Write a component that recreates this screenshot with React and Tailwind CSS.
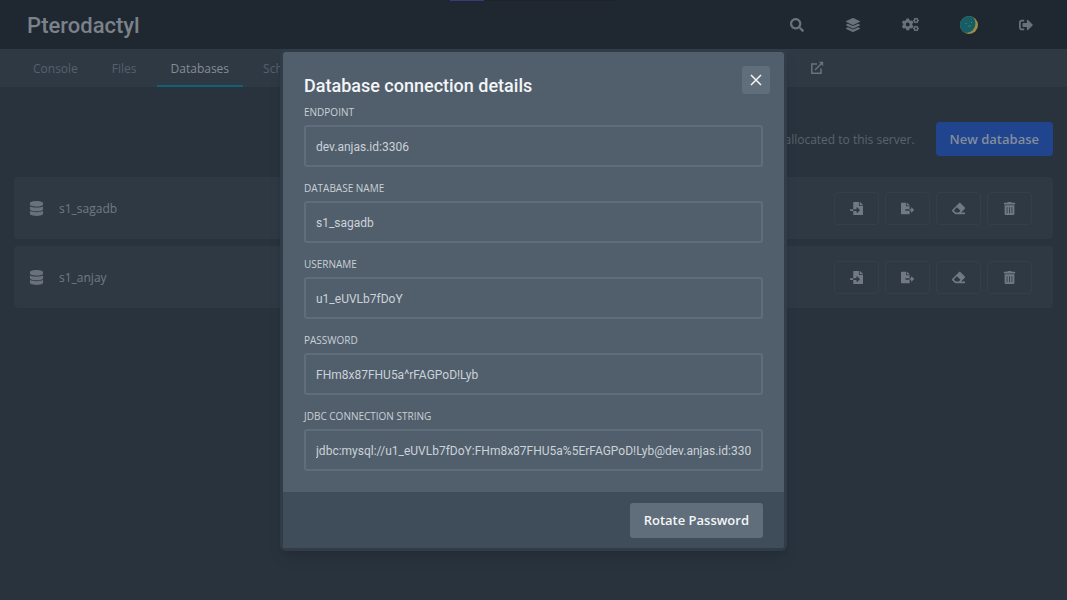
import { useState } from "react";
import { FaSearch, FaLayerGroup, FaCogs, FaSignOutAlt, FaDatabase } from "react-icons/fa";
import { FaFileImport, FaFileExport, FaEraser, FaTrashAlt } from "react-icons/fa";

const tabs = ["Console", "Files", "Databases", "Schedules", "Users", "Backups", "Network", "Startup", "Settings", "Activity"];

const databases = ["s1_sagadb", "s1_anjay"];

const actions = [
  { label: "Import", Icon: FaFileImport },
  { label: "Export", Icon: FaFileExport },
  { label: "Clear", Icon: FaEraser },
  { label: "Delete", Icon: FaTrashAlt },
];

const fields = [
  { id: "endpoint", label: "Endpoint", value: "dev.anjas.id:3306" },
  { id: "name", label: "Database name", value: "s1_sagadb" },
  { id: "username", label: "Username", value: "u1_eUVLb7fDoY" },
  { id: "password", label: "Password", value: "FHm8x87FHU5a^rFAGPoD!Lyb" },
  {
    id: "jdbc",
    label: "JDBC Connection String",
    value: "jdbc:mysql://u1_eUVLb7fDoY:FHm8x87FHU5a%5ErFAGPoD!Lyb@dev.anjas.id:3306/s1_sagadb",
  },
];

function Avatar() {
  return (
    <svg viewBox="0 0 36 36" className="size-[18px]" aria-hidden="true">
      <defs>
        <clipPath id="avatar-clip">
          <circle cx="18" cy="18" r="18" />
        </clipPath>
      </defs>
      <g clipPath="url(#avatar-clip)">
        <rect width="36" height="36" fill="#988e46" />
        <circle cx="12" cy="15" r="19" fill="#175d66" />
        <circle cx="12" cy="15" r="1.2" fill="#6c878c" />
        <circle cx="23" cy="13" r="1.2" fill="#6c878c" />
        <path d="M16 20 Q19 22 22 19" fill="none" stroke="#6c878c" strokeWidth="1.3" />
      </g>
    </svg>
  );
}

function ExternalLinkIcon() {
  return (
    <svg viewBox="0 0 14 14" className="size-[14px]" fill="none" stroke="currentColor" strokeWidth="1.5" aria-hidden="true">
      <path d="M7 3H1.8V12.2H11V7.5" />
      <path d="M5 9 12 2" />
      <path d="M8.8 .8H13.2V5.2Z" fill="currentColor" stroke="none" />
    </svg>
  );
}

function Header() {
  return (
    <header className="flex h-[49px] items-center justify-between bg-[#1f2731] pr-[14px] pl-[27px] text-[#69717b]">
      <a href="#home" className="pt-[2px] font-['Roboto',sans-serif] text-[22px] font-medium text-[#7b828a]">
        Pterodactyl
      </a>
      <nav aria-label="Account" className="flex h-full">
        <button aria-label="Search" className="flex w-14 items-center justify-center"><FaSearch size={14} /></button>
        <a href="#servers" aria-label="Servers" className="flex w-14 items-center justify-center"><FaLayerGroup size={14} /></a>
        <a href="#admin" aria-label="Admin" className="flex w-[58px] items-center justify-center"><FaCogs size={17} /></a>
        <a href="#account" aria-label="Account" className="flex w-[60px] items-center justify-center"><Avatar /></a>
        <button aria-label="Sign out" className="flex w-[54px] items-center justify-center"><FaSignOutAlt size={14} /></button>
      </nav>
    </header>
  );
}

function SubNavigation() {
  return (
    <nav aria-label="Server" className="flex h-[38px] items-stretch gap-[6px] overflow-hidden bg-[#2f3944] pl-[19px] text-[12px] text-[#56606b]">
      {tabs.map((tab) => (
        <a
          key={tab}
          href={"#" + tab.toLowerCase()}
          aria-current={tab === "Databases" ? "page" : undefined}
          className="flex shrink-0 items-center border-b-2 border-transparent px-[14px] pt-[3px] aria-[current=page]:border-[#145f75] aria-[current=page]:text-[#858c94]"
        >
          {tab}
        </a>
      ))}
      <a href="#external" aria-label="Open in admin" className="flex shrink-0 items-center px-[14px] text-[#69727c]">
        <ExternalLinkIcon />
      </a>
    </nav>
  );
}

function DatabaseRow({ name }) {
  return (
    <li className="flex h-[62px] items-center rounded bg-[#2f3944] pr-[21px] pl-[15px]">
      <FaDatabase size={15} className="text-[#69727c]" />
      <span className="ml-[15px] flex-1 pt-px text-[12px] text-[#727a83]">{name}</span>
      <div className="flex gap-[6px]">
        {actions.map(({ label, Icon }) => (
          <button
            key={label}
            aria-label={label + " " + name}
            className="flex h-[33px] w-[45px] items-center justify-center rounded border border-[#343f4a] text-[#717983]"
          >
            <Icon size={13} />
          </button>
        ))}
      </div>
    </li>
  );
}

function ConnectionDialog({ onClose }) {
  return (
    <div className="absolute inset-x-0 top-[49px] flex justify-center">
      <section
        role="dialog"
        aria-modal="true"
        aria-labelledby="dialog-title"
        className="w-full max-w-[507px] rounded-md border-[3px] border-[#303d49] bg-[#515f6c] shadow-lg"
      >
        <div className="px-[21px] pt-[14px] pb-[21px]">
          <div className="flex items-start justify-between">
            <h2 id="dialog-title" className="pt-2 font-['Roboto',sans-serif] text-[18px] leading-6 font-medium text-[#f3f5f7]">
              Database connection details
            </h2>
            <button
              aria-label="Close"
              onClick={onClose}
              className="-mr-[7px] flex size-7 items-center justify-center rounded-[3px] bg-[#606d7b] text-[#f3f5f7]"
            >
              <svg viewBox="0 0 12 12" className="size-3" fill="none" stroke="currentColor" strokeWidth="1.5">
                <path d="M1 1 11 11M11 1 1 11" />
              </svg>
            </button>
          </div>
          <div className="mt-[7px] flex flex-col gap-[14px]">
            {fields.map(({ id, label, value }) => (
              <div key={id}>
                <label htmlFor={id} className="block text-[10px] leading-[14px] text-[#c9d0d7] uppercase">
                  {label}
                </label>
                <input
                  id={id}
                  readOnly
                  defaultValue={value}
                  className="mt-[6px] block h-[42px] w-full rounded-[3px] border-2 border-[#606d7b] bg-transparent px-[10px] pt-px font-['Roboto',sans-serif] text-[12px] text-[#cbd2d9] outline-none"
                />
              </div>
            ))}
          </div>
        </div>
        <footer className="flex justify-end rounded-b-[3px] bg-[#3f4d5a] px-[21px] pt-[11px] pb-[10px]">
          <button className="h-[35px] rounded-[3px] bg-[#606d7b] px-[14px] pt-px text-[13px] font-semibold text-[#f3f5f7]">
            Rotate Password
          </button>
        </footer>
      </section>
    </div>
  );
}

export default function App() {
  const [open, setOpen] = useState(true);
  return (
    <div className="relative min-h-screen bg-[#29333d] font-['Open_Sans',sans-serif]">
      <div aria-hidden="true" className="absolute inset-x-0 top-0 flex h-px justify-center">
        <div className="w-[168px] bg-[#202329]">
          <div className="h-px w-[34px] bg-[#363b7a]" />
        </div>
      </div>
      <Header />
      <SubNavigation />
      <main className="px-[14px] pt-[35px]">
        <div className="flex items-center justify-end gap-[21px]">
          <p className="pt-px text-[12px] text-[#59636d]">2 of 5 databases have been allocated to this server.</p>
          <button className="h-[34px] rounded bg-[#21448e] px-[14px] pt-px text-[13px] font-semibold text-[#858d9d]">
            New database
          </button>
        </div>
        <ul className="mt-[21px] flex flex-col gap-[7px]">
          {databases.map((name) => (
            <DatabaseRow key={name} name={name} />
          ))}
        </ul>
      </main>
      {open && <ConnectionDialog onClose={() => setOpen(false)} />}
    </div>
  );
}
